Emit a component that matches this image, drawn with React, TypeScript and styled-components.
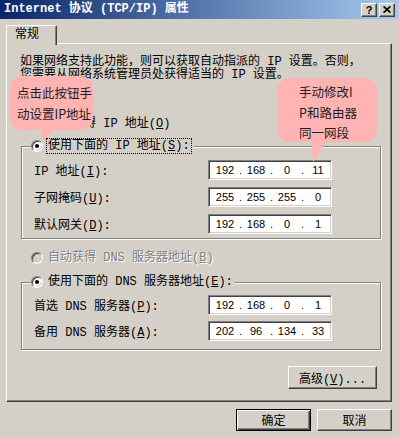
import React from "react";
import styled, { createGlobalStyle, css } from "styled-components";

const FACE = "#d4d0c8";
const SONG = `"Liberation Mono", "Noto Sans CJK SC", monospace`;

const Global = createGlobalStyle`
  html, body { margin: 0; padding: 0; background: ${FACE}; }
  * { box-sizing: border-box; }
`;

const Dialog = styled.div`
  position: relative;
  width: 399px;
  height: 438px;
  background: ${FACE};
  overflow: hidden;
  font: 12px ${SONG};
  color: #000;
  display: flex;
  flex-direction: column;
`;

const TitleBar = styled.div`
  height: 19px;
  display: flex;
  align-items: center;
  padding: 0 4px;
  background: linear-gradient(to right, #0a246a, #a6caf0);
`;

const TitleText = styled.div`
  flex: 1;
  color: #fff;
  font: bold 12px ${SONG};
  white-space: pre;
  line-height: 19px;
`;

const CapButton = styled.div`
  width: 16px;
  height: 14px;
  background: ${FACE};
  border: 1px solid;
  border-color: #fff #404040 #404040 #fff;
  box-shadow: inset -1px -1px #808080;
  display: flex;
  align-items: center;
  justify-content: center;
  & + & {
    margin-left: 2px;
  }
`;

const HelpGlyph = styled.span`
  font: bold 11px "Liberation Sans", Arial, sans-serif;
  line-height: 12px;
`;

const Body = styled.div`
  display: flex;
  flex-direction: column;
  padding: 0 7px 0 6px;
`;

const TabStrip = styled.div`
  display: flex;
  margin-top: 6px;
  height: 18px;
  position: relative;
  z-index: 1;
`;

const Tab = styled.div`
  width: 51px;
  height: 20px;
  background: ${FACE};
  border-left: 1px solid #fff;
  border-top: 1px solid #fff;
  border-right: 1px solid #404040;
  border-radius: 2px 2px 0 0;
  box-shadow: inset -1px 0 #808080;
  padding-left: 8px;
  line-height: 18px;
`;

const Panel = styled.div`
  height: 359px;
  border: 1px solid;
  border-color: #fff #404040 #404040 #fff;
  box-shadow: inset -1px -1px #808080;
  display: flex;
  flex-direction: column;
`;

const Intro = styled.div`
  margin: 12px 0 0 13px;
  line-height: 13px;
  white-space: nowrap;
`;

const OptionRow = styled.div<{ $top: number }>`
  display: flex;
  align-items: center;
  height: 16px;
  margin: ${(p) => p.$top}px 0 0 24px;
`;

const Radio = styled.span<{ $checked?: boolean; $disabled?: boolean }>`
  position: relative;
  flex: none;
  width: 12px;
  height: 12px;
  border-radius: 50%;
  background: ${(p) => (p.$disabled ? FACE : "#fff")};
  border: 1px solid;
  border-color: #808080 #fff #fff #808080;
  box-shadow: inset 1px 1px #404040, inset -1px -1px ${FACE};
  &::after {
    content: "";
    display: ${(p) => (p.$checked ? "block" : "none")};
    position: absolute;
    left: 3px;
    top: 3px;
    width: 4px;
    height: 4px;
    border-radius: 50%;
    background: #000;
  }
`;

const OptLabel = styled.span<{ $focus?: boolean; $disabled?: boolean }>`
  margin-left: 5px;
  white-space: pre;
  line-height: 14px;
  ${(p) =>
    p.$focus &&
    css`
      margin-left: 3px;
      padding: 0 1px;
      border: 1px dotted #000;
    `}
  ${(p) =>
    p.$disabled &&
    css`
      color: #808080;
      text-shadow: 1px 1px #fff;
    `}
`;

const Group = styled.fieldset<{ $top: number }>`
  margin: ${(p) => p.$top}px 0 0 14px;
  width: 360px;
  padding: 0;
  border: 1px solid #808080;
  box-shadow: inset 1px 1px #fff, 1px 1px #fff;
  min-inline-size: 0;
`;

const Legend = styled.legend`
  margin-left: 9px;
  padding: 0 2px 0 0;
  background: ${FACE};
  height: 16px;
  display: flex;
  align-items: center;
`;

const Rows = styled.div<{ $pt: number; $pb: number; $gap: number }>`
  display: flex;
  flex-direction: column;
  gap: ${(p) => p.$gap}px;
  padding: ${(p) => p.$pt}px 0 ${(p) => p.$pb}px 12px;
`;

const FieldRow = styled.div`
  display: flex;
  align-items: center;
  height: 20px;
`;

const FieldLabel = styled.span`
  width: 174px;
  white-space: pre;
`;

const IpBox = styled.div`
  width: 124px;
  height: 20px;
  background: #fff;
  border: 1px solid;
  border-color: #808080 #fff #fff #808080;
  box-shadow: inset 1px 1px #404040, inset -1px -1px ${FACE};
  display: flex;
  align-items: center;
  padding-left: 4px;
  font: 11px "Liberation Sans", Arial, sans-serif;
`;

const Octet = styled.span`
  width: 24px;
  text-align: center;
`;

const Dot = styled.span`
  width: 7px;
  text-align: center;
`;

const AdvRow = styled.div`
  display: flex;
  justify-content: flex-end;
  margin-top: 16px;
  padding-right: 14px;
`;

const Button = styled.button<{ $w: number; $h: number; $default?: boolean }>`
  width: ${(p) => p.$w}px;
  height: ${(p) => p.$h}px;
  padding: 0;
  background: ${FACE};
  color: #000;
  font: 12px ${SONG};
  border: 1px solid;
  border-color: #fff #404040 #404040 #fff;
  box-shadow: inset -1px -1px #808080;
  white-space: pre;
  ${(p) =>
    p.$default &&
    css`
      border-color: #000;
      box-shadow: inset 1px 1px #fff, inset -1px -1px #404040, inset -2px -2px #808080;
    `}
`;

const Footer = styled.div`
  display: flex;
  justify-content: flex-end;
  gap: 6px;
  margin-top: 7px;
`;

const Callout = styled.div<{ $x: number; $y: number; $w: number; $h: number; $pt: number; $pl: number; $lh: number }>`
  position: absolute;
  left: ${(p) => p.$x}px;
  top: ${(p) => p.$y}px;
  width: ${(p) => p.$w}px;
  height: ${(p) => p.$h}px;
  padding: ${(p) => p.$pt}px 0 0 ${(p) => p.$pl}px;
  background: #ffb3b3;
  border-radius: 12px;
  font: 12.5px "Noto Sans CJK SC", sans-serif;
  line-height: ${(p) => p.$lh}px;
  color: #1e1e1e;
  z-index: 2;
`;

const Tail = styled.svg`
  position: absolute;
  left: 0;
  top: 0;
  overflow: visible;
`;

const U = styled.u`
  text-underline-offset: 1px;
`;

function Ip({ parts }: { parts: string[] }) {
  return (
    <IpBox>
      {parts.map((v, i) => (
        <React.Fragment key={i}>
          {i > 0 && <Dot>.</Dot>}
          <Octet>{v}</Octet>
        </React.Fragment>
      ))}
    </IpBox>
  );
}

export default function App() {
  return (
    <>
      <Global />
      <Dialog>
        <TitleBar>
          <TitleText>Internet 协议 (TCP/IP) 属性</TitleText>
          <CapButton>
            <HelpGlyph>?</HelpGlyph>
          </CapButton>
          <CapButton>
            <svg width="8" height="7" viewBox="0 0 8 7">
              <path d="M0.6 0.4 L7.4 6.6 M7.4 0.4 L0.6 6.6" stroke="#000" strokeWidth="1.7" />
            </svg>
          </CapButton>
        </TitleBar>
        <Body>
          <TabStrip>
            <Tab>常规</Tab>
          </TabStrip>
          <Panel>
            <Intro>
              如果网络支持此功能，则可以获取自动指派的 IP 设置。否则，
              <br />
              您需要从网络系统管理员处获得适当的 IP 设置。
            </Intro>
            <OptionRow $top={34}>
              <Radio />
              <OptLabel>
                自动获得 IP 地址(<U>O</U>)
              </OptLabel>
            </OptionRow>
            <Group $top={6}>
              <Legend>
                <Radio $checked />
                <OptLabel $focus>
                  使用下面的 IP 地址(<U>S</U>):
                </OptLabel>
              </Legend>
              <Rows $pt={6} $pb={4} $gap={7}>
                <FieldRow>
                  <FieldLabel>
                    IP 地址(<U>I</U>):
                  </FieldLabel>
                  <Ip parts={["192", "168", "0", "11"]} />
                </FieldRow>
                <FieldRow>
                  <FieldLabel>
                    子网掩码(<U>U</U>):
                  </FieldLabel>
                  <Ip parts={["255", "255", "255", "0"]} />
                </FieldRow>
                <FieldRow>
                  <FieldLabel>
                    默认网关(<U>D</U>):
                  </FieldLabel>
                  <Ip parts={["192", "168", "0", "1"]} />
                </FieldRow>
              </Rows>
            </Group>
            <OptionRow $top={11}>
              <Radio $disabled />
              <OptLabel $disabled>
                自动获得 DNS 服务器地址(<U>B</U>)
              </OptLabel>
            </OptionRow>
            <Group $top={8}>
              <Legend>
                <Radio $checked />
                <OptLabel>
                  使用下面的 DNS 服务器地址(<U>E</U>):
                </OptLabel>
              </Legend>
              <Rows $pt={5} $pb={8} $gap={6}>
                <FieldRow>
                  <FieldLabel>
                    首选 DNS 服务器(<U>P</U>):
                  </FieldLabel>
                  <Ip parts={["192", "168", "0", "1"]} />
                </FieldRow>
                <FieldRow>
                  <FieldLabel>
                    备用 DNS 服务器(<U>A</U>):
                  </FieldLabel>
                  <Ip parts={["202", "96", "134", "33"]} />
                </FieldRow>
              </Rows>
            </Group>
            <AdvRow>
              <Button $w={89} $h={23}>
                高级(<U>V</U>)...
              </Button>
            </AdvRow>
          </Panel>
          <Footer>
            <Button $w={75} $h={22} $default>
              确定
            </Button>
            <Button $w={75} $h={22}>
              取消
            </Button>
          </Footer>
        </Body>

        <Callout $x={10} $y={76} $w={83} $h={54} $pt={6} $pl={7} $lh={21}>
          <Tail width="83" height="54">
            <polygon points="31,52 46,52 33,65" fill="#ffb3b3" />
          </Tail>
          点击此按钮手
          <br />
          动设置IP地址
        </Callout>
        <Callout $x={277} $y={78} $w={100} $h={64} $pt={4} $pl={22} $lh={20.5}>
          <Tail width="100" height="64">
            <polygon points="34,62 50,62 36,84" fill="#ffb3b3" />
          </Tail>
          手动修改I
          <br />
          P和路由器
          <br />
          同一网段
        </Callout>
      </Dialog>
    </>
  );
}
